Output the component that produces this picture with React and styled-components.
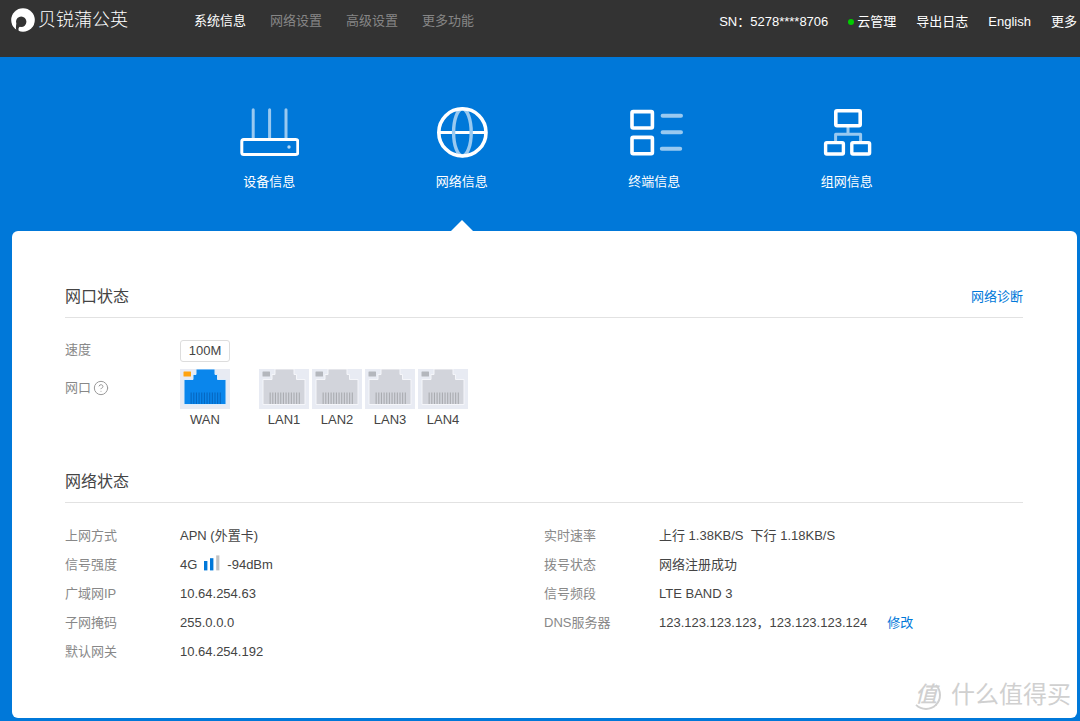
import React, { useState } from "react";
import styled, { createGlobalStyle, css } from "styled-components";
import { CircleHelp } from "lucide-react";

const menu = ["系统信息", "网络设置", "高级设置", "更多功能"];

const ports = [
  { name: "WAN", active: true },
  { name: "LAN1" },
  { name: "LAN2" },
  { name: "LAN3" },
  { name: "LAN4" }
];

const RouterIcon = () => (
  <Icon viewBox="0 0 60 52">
    <path d="M14.2 2.8V31M30.6 2.8V31M47 2.8V31" opacity="0.6" strokeLinecap="round" />
    <rect x="2.8" y="32.4" width="56" height="15.2" rx="2" />
    <circle cx="50" cy="40" r="1.7" fill="#fff" stroke="none" opacity="0.7" />
  </Icon>
);

const GlobeIcon = () => (
  <Icon viewBox="0 0 60 52">
    <path d="M6 25.4H54" />
    <ellipse cx="30.4" cy="25.4" rx="8.8" ry="23.4" stroke="#99c9f0" strokeWidth="3.4" />
    <circle cx="30.4" cy="25.4" r="23.6" strokeWidth="3.6" />
  </Icon>
);

const ListIcon = () => (
  <Icon viewBox="0 0 60 52">
    <rect x="8" y="4.6" width="20.4" height="16.4" rx="1.2" strokeWidth="3.6" />
    <rect x="8" y="30.4" width="20.4" height="16.4" rx="1.2" strokeWidth="3.6" />
    <path
      d="M38.6 8.8H57M38.6 25.3H57M37.8 41.8H56.2"
      opacity="0.6"
      strokeWidth="4"
      strokeLinecap="round"
    />
  </Icon>
);

const TreeIcon = () => (
  <Icon viewBox="0 0 60 52">
    <path d="M31 20V27M18.6 34V27.2H43.6V34" opacity="0.6" strokeLinejoin="round" />
    <rect x="18.8" y="3.8" width="24.4" height="15" rx="1.2" strokeWidth="3.6" />
    <rect x="8.6" y="35.6" width="17.8" height="11.4" rx="1.2" strokeWidth="3.4" />
    <rect x="34.8" y="35.6" width="17.8" height="11.4" rx="1.2" strokeWidth="3.4" />
  </Icon>
);

const tabs = [
  { title: "设备信息", icon: <RouterIcon /> },
  { title: "网络信息", icon: <GlobeIcon /> },
  { title: "终端信息", icon: <ListIcon /> },
  { title: "组网信息", icon: <TreeIcon /> }
];

const pins = Array.from({ length: 12 }, (_, i) => 10.6 + i * 2.65);

const PortIcon = ({ active }) => (
  <PortSvg viewBox="0 0 50 40" aria-hidden="true">
    <rect width="50" height="40" fill="#e8ebf3" />
    <path
      d="M16 0H35V5.5H37.5V10.5H46V35.5H4V10.5H13V5.5H16Z"
      fill={active ? "#0a86ec" : "#d2d4db"}
      stroke={active ? "#dcecfb" : "#f5f6fa"}
      strokeWidth="1"
    />
    <rect x="3.5" y="2.5" width="7.5" height="5" rx="0.5" fill={active ? "#ffa30f" : "#b4b7bd"} />
    {pins.map(x => (
      <rect key={x} x={x} y="23.5" width="1.1" height="11.5" fill={active ? "#0667c0" : "#a9abb0"} />
    ))}
  </PortSvg>
);

const Signal = () => (
  <SignalSvg viewBox="0 0 16 16" aria-hidden="true">
    <rect x="0" y="6" width="3.4" height="9.4" fill="#0078d9" />
    <rect x="6" y="3.2" width="3.4" height="12.2" fill="#0078d9" />
    <rect x="12.2" y="0.4" width="3.2" height="15" fill="#c2c2c2" />
  </SignalSvg>
);

const Logo = () => (
  <LogoSvg viewBox="0 0 24 24" aria-hidden="true">
    <circle cx="12" cy="12" r="11.8" fill="#fff" />
    <circle cx="10.2" cy="13.8" r="5.2" fill="#333" />
    <path d="M5.4 15.4C4.8 18 4.8 20.4 5.4 22.4L8.2 24C7 21.6 7.2 19.8 9 18.6Z" fill="#333" />
  </LogoSvg>
);

const App = () => {
  const [page, setPage] = useState(menu[0]);
  const [tab, setTab] = useState("网络信息");

  return (
    <Page>
      <GlobalStyle />
      <Header>
        <Brand href="#">
          <Logo />
          贝锐蒲公英
        </Brand>
        <Menu>
          {menu.map(item => (
            <MenuLink key={item} href="#" $active={item === page} onClick={() => setPage(item)}>
              {item}
            </MenuLink>
          ))}
        </Menu>
        <Tools>
          <span>SN：5278****8706</span>
          <ToolLink href="#">
            <Dot />
            云管理
          </ToolLink>
          <ToolLink href="#">导出日志</ToolLink>
          <ToolLink href="#">English</ToolLink>
          <ToolLink href="#">更多</ToolLink>
        </Tools>
      </Header>

      <Tabs>
        {tabs.map(({ title, icon }) => (
          <Tab key={title} type="button" $active={title === tab} onClick={() => setTab(title)}>
            {icon}
            {title}
          </Tab>
        ))}
      </Tabs>

      <Card>
        <Section>
          <SectionHead>
            <Title>网口状态</Title>
            <Link href="#">网络诊断</Link>
          </SectionHead>
          <PortGrid>
            <Label>速度</Label>
            <Speed>100M</Speed>
            <PortLabel>
              网口
              <Help type="button" aria-label="网口">
                <CircleHelp size={16} strokeWidth={1.5} />
              </Help>
            </PortLabel>
            <Ports>
              {ports.map(({ name, active }) => (
                <Port key={name} $active={active}>
                  <PortIcon active={active} />
                  {name}
                </Port>
              ))}
            </Ports>
          </PortGrid>
        </Section>

        <Section>
          <SectionHead>
            <Title>网络状态</Title>
          </SectionHead>
          <Columns>
            <Details>
              <Label>上网方式</Label>
              <Value>APN (外置卡)</Value>
              <Label>信号强度</Label>
              <Value>
                4G
                <Signal />
                -94dBm
              </Value>
              <Label>广域网IP</Label>
              <Value>10.64.254.63</Value>
              <Label>子网掩码</Label>
              <Value>255.0.0.0</Value>
              <Label>默认网关</Label>
              <Value>10.64.254.192</Value>
            </Details>
            <Details>
              <Label>实时速率</Label>
              <Value>
                <span>上行 1.38KB/S</span>
                <Next>下行 1.18KB/S</Next>
              </Value>
              <Label>拨号状态</Label>
              <Value>网络注册成功</Value>
              <Label>信号频段</Label>
              <Value>LTE BAND 3</Value>
              <Label>DNS服务器</Label>
              <Value>
                123.123.123.123，123.123.123.124
                <EditLink href="#">修改</EditLink>
              </Value>
            </Details>
          </Columns>
        </Section>
      </Card>

      <Watermark>
        <Stamp>值</Stamp>
        什么值得买
      </Watermark>
    </Page>
  );
};

// ==== STYLES ====
const GlobalStyle = createGlobalStyle`
  * {
    box-sizing: border-box;
  }
  body {
    margin: 0;
    background: #0078d9;
    color: #444;
    font-family: "Liberation Sans", "Noto Sans CJK SC", sans-serif;
    font-size: 13px;
    line-height: 20px;
  }
  a {
    color: inherit;
    text-decoration: none;
  }
  button {
    padding: 0;
    border: 0;
    background: none;
    color: inherit;
    font: inherit;
    cursor: pointer;
  }
`;

const Page = styled.div`
  position: relative;
  padding-bottom: 3px;
`;

const Header = styled.header`
  display: flex;
  align-items: flex-start;
  padding: 8px 3px 25px 11px;
  background: #333;
  color: #fff;
  white-space: nowrap;
`;

const Brand = styled.a`
  display: flex;
  align-items: center;
  gap: 3px;
  width: 183px;
  font-size: 18px;
  font-weight: 300;
  line-height: 24px;
`;

const LogoSvg = styled.svg`
  width: 24px;
  height: 24px;
`;

const Menu = styled.nav`
  display: flex;
  gap: 24px;
  padding-top: 3px;
`;

const MenuLink = styled.a`
  color: ${({ $active }) => ($active ? "#fff" : "#868686")};
`;

const Tools = styled.div`
  display: flex;
  gap: 20px;
  margin-left: auto;
  padding-top: 4px;
`;

const ToolLink = styled.a`
  display: flex;
  align-items: center;
`;

const Dot = styled.span`
  width: 6px;
  height: 6px;
  margin-right: 3px;
  border-radius: 50%;
  background: #0c0;
`;

const Tabs = styled.nav`
  display: grid;
  grid-template-columns: repeat(4, 1fr);
  padding: 50px 137px 0 173px;
`;

const Tab = styled.button`
  position: relative;
  display: flex;
  flex-direction: column;
  align-items: center;
  gap: 13px;
  padding-bottom: 39px;
  color: #fff;

  ${({ $active }) =>
    $active &&
    css`
      &::after {
        content: "";
        position: absolute;
        bottom: 0;
        border: 11px solid transparent;
        border-top-width: 0;
        border-bottom-color: #fff;
      }
    `}
`;

const Icon = styled.svg`
  width: 60px;
  height: 52px;
  fill: none;
  stroke: #fff;
  stroke-width: 3;
`;

const Card = styled.main`
  margin: 0 3px 0 12px;
  padding: 54px 54px 52px 53px;
  border-radius: 6px;
  background: #fff;
`;

const Section = styled.section`
  & + & {
    margin-top: 40px;
  }
`;

const SectionHead = styled.div`
  display: flex;
  align-items: center;
  justify-content: space-between;
  padding-bottom: 8px;
  border-bottom: 1px solid #e2e2e2;
`;

const Title = styled.h2`
  margin: 0;
  font-size: 16px;
  font-weight: 400;
  line-height: 24px;
`;

const Link = styled.a`
  color: #0078d9;
`;

const Label = styled.dt`
  color: #888;
`;

const PortGrid = styled.dl`
  display: grid;
  grid-template-columns: 115px 1fr;
  row-gap: 7px;
  margin: 22px 0 0;
`;

const Speed = styled.dd`
  justify-self: start;
  width: 50px;
  margin: 0;
  border: 1px solid #ddd;
  border-radius: 3px;
  text-align: center;
`;

const PortLabel = styled(Label)`
  display: flex;
  align-items: center;
  align-self: start;
  gap: 2px;
  padding-top: 9px;
`;

const Help = styled.button`
  display: flex;
  color: #999;
`;

const Ports = styled.dd`
  display: flex;
  gap: 3px;
  margin: 0;
`;

const Port = styled.div`
  display: flex;
  flex-direction: column;
  align-items: center;
  gap: 1px;
  margin-right: ${({ $active }) => ($active ? "26px" : "0")};
`;

const PortSvg = styled.svg`
  width: 50px;
  height: 40px;
`;

const Columns = styled.div`
  display: grid;
  grid-template-columns: 1fr 1fr;
  margin-top: 18px;
`;

const Details = styled.dl`
  display: grid;
  grid-template-columns: 115px 1fr;
  align-content: start;
  margin: 0;
  line-height: 29px;
`;

const Value = styled.dd`
  display: flex;
  align-items: center;
  margin: 0;
  white-space: nowrap;
`;

const SignalSvg = styled.svg`
  width: 16px;
  height: 16px;
  margin: 0 7px 4px;
`;

const Next = styled.span`
  margin-left: 7px;
`;

const EditLink = styled(Link)`
  margin-left: 20px;
`;

const Watermark = styled.div`
  position: absolute;
  right: 9px;
  bottom: 11px;
  display: flex;
  align-items: center;
  gap: 10px;
  color: #d0d0d0;
  font-size: 24px;
  line-height: 30px;
  pointer-events: none;
`;

const Stamp = styled.span`
  width: 30px;
  height: 30px;
  border: 2px solid transparent;
  border-right-color: #d0d0d0;
  border-bottom-color: #d0d0d0;
  border-radius: 50%;
  font-size: 22px;
  font-style: italic;
  font-weight: 500;
  line-height: 26px;
  text-align: center;
`;

export default App;
